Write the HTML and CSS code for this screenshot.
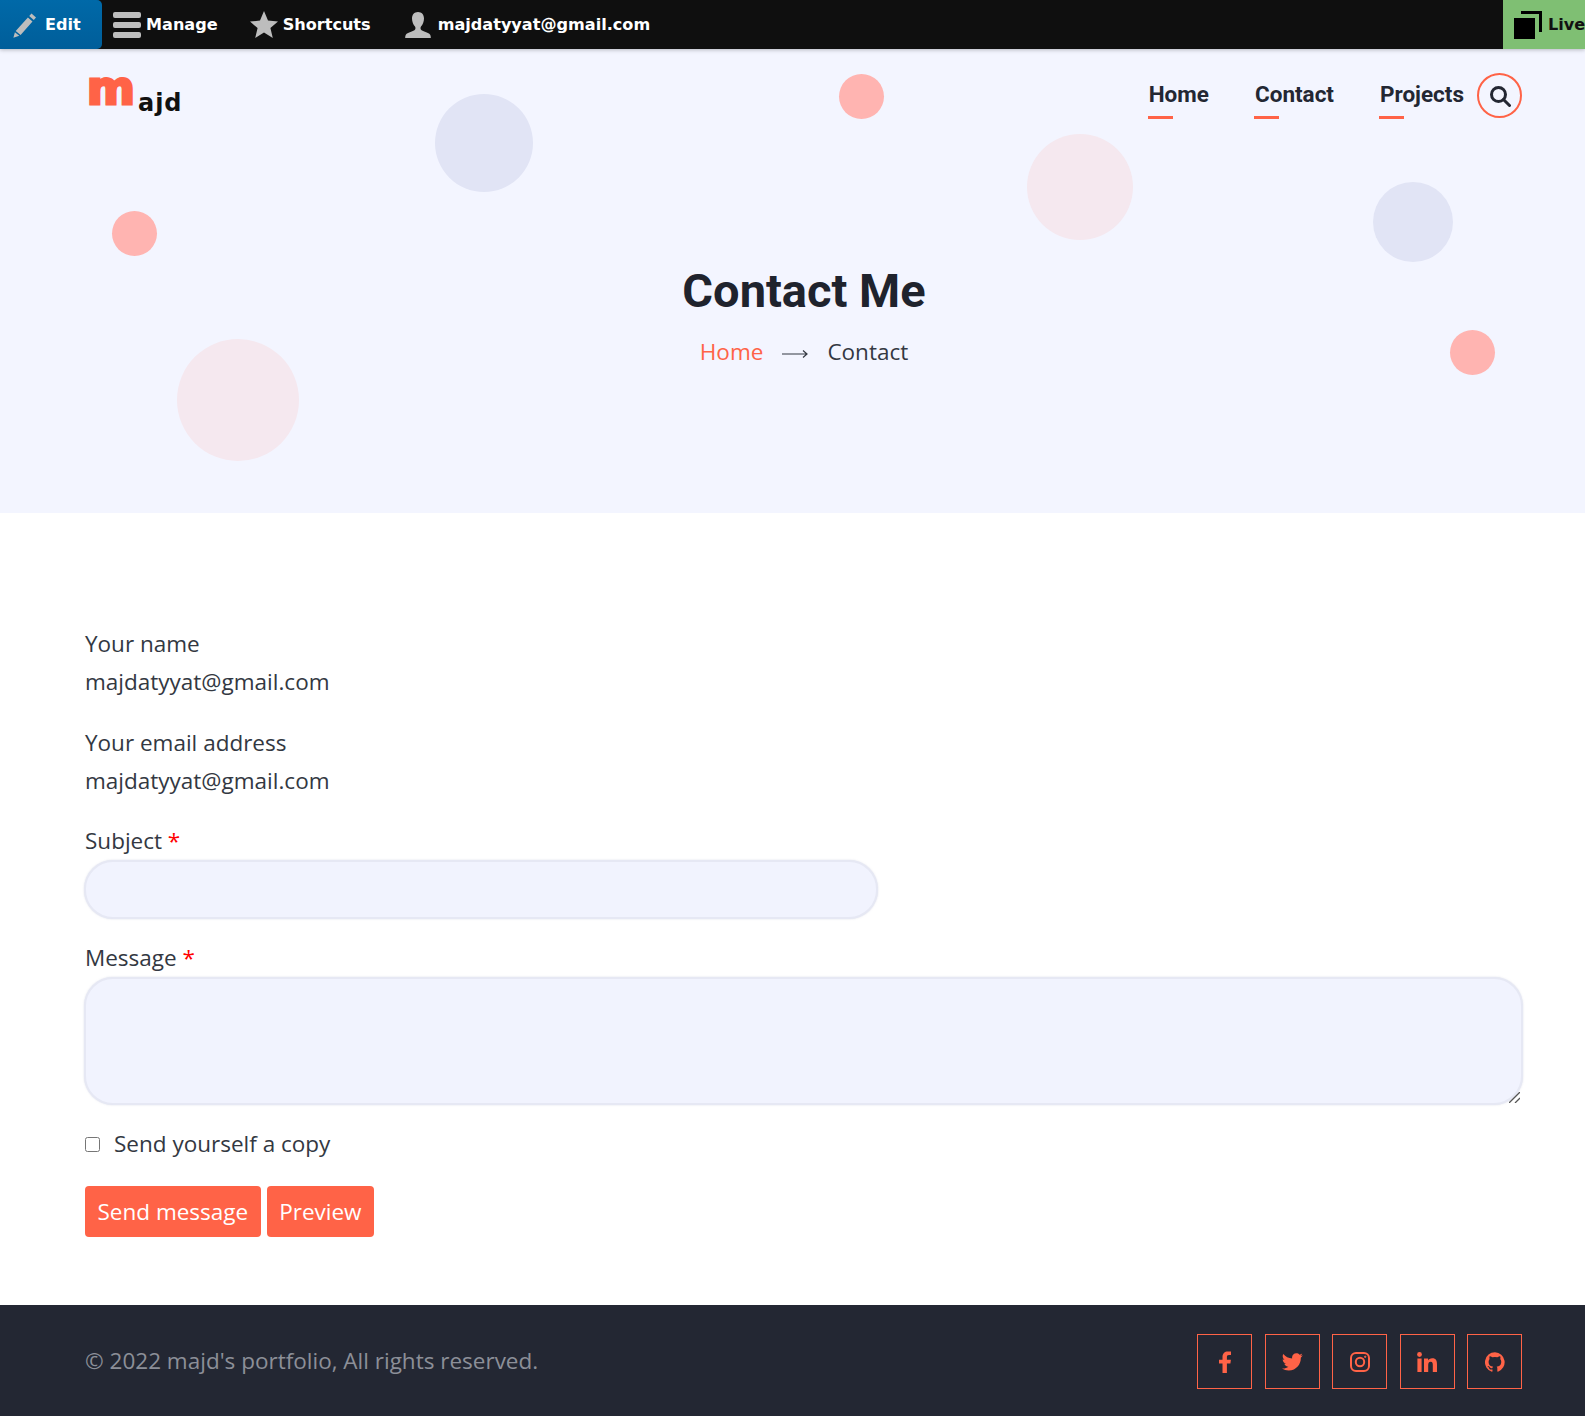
FILE: index.html
```html
<!DOCTYPE html>
<html lang="en">
<head>
    <meta charset="UTF-8">
    <meta name="viewport" content="width=device-width, initial-scale=1.0">
    <title>Contact Me</title>
    <link rel="stylesheet" href="styles.css">
</head>
<body>
    <div class="toolbar">
        <a class="tool tool-edit">
            <svg class="tool-icon" width="26" height="26" viewBox="0 0 26 26"><path d="M19.500 1.500l4.500 4-2.200 2.600-4.600-4zM15.900 5.400l4.600 4L8.600 23 3.700 19zM2.900 20.200l4.400 3.600-5.900 2z" fill="#bdbdbd"/></svg>
            <span>Edit</span>
        </a>
        <a class="tool tool-manage">
            <svg class="tool-icon" width="28" height="28" viewBox="0 0 28 28"><g fill="#bdbdbd"><rect y="1" width="28" height="6" rx="2"/><rect y="11" width="28" height="6" rx="2"/><rect y="21" width="28" height="6" rx="2"/></g></svg>
            <span>Manage</span>
        </a>
        <a class="tool tool-shortcuts">
            <svg class="tool-icon" width="28" height="28" viewBox="0 0 28 28"><path d="M14 0l4 9.600 10 .9-7.600 6.600L22.800 27 14 21.600 5.200 27l2.400-9.900L0 10.500l10-.9z" fill="#bdbdbd"/></svg>
            <span>Shortcuts</span>
        </a>
        <a class="tool tool-user">
            <svg class="tool-icon" width="28" height="28" viewBox="0 0 28 28"><path d="M14 1c3.800 0 6 2.800 6 6.500 0 3.200-1.300 6.200-3 8-.8 1-.6 3 .6 3.800 2.400 1.500 6.900 2.300 8.400 4.300.6.800.8 2.200.8 3.400H1.200c0-1.200.2-2.600.8-3.400 1.500-2 6-2.800 8.400-4.300 1.200-.8 1.400-2.800.6-3.800-1.700-1.800-3-4.800-3-8C8 3.800 10.200 1 14 1z" fill="#bdbdbd"/></svg>
            <span>majdatyyat@gmail.com</span>
        </a>
        <a class="tool tool-live">
            <svg class="tool-icon" width="28" height="28" viewBox="0 0 28 28"><rect y="7" width="21" height="21" fill="#000"/><path d="M7 0h21v21h-3V3H7z" fill="#000"/></svg>
            <span>Live</span>
        </a>
    </div>

    <header class="hero">
        <span class="dot dot-blue" style="left:435px;top:45px;width:98px;height:98px"></span>
        <span class="dot dot-salmon" style="left:839px;top:25px;width:45px;height:45px"></span>
        <span class="dot dot-pink" style="left:1027px;top:85px;width:106px;height:106px"></span>
        <span class="dot dot-blue" style="left:1373px;top:133px;width:80px;height:80px"></span>
        <span class="dot dot-salmon" style="left:112px;top:162px;width:45px;height:45px"></span>
        <span class="dot dot-salmon" style="left:1450px;top:281px;width:45px;height:45px"></span>
        <span class="dot dot-pink" style="left:177px;top:290px;width:122px;height:122px"></span>

        <nav class="navbar">
            <a class="logo"><span class="logo-m">m</span><span class="logo-rest">ajd</span></a>
            <ul class="nav-links">
                <li><a>Home</a></li>
                <li><a>Contact</a></li>
                <li><a>Projects</a></li>
            </ul>
            <button class="search-btn">
                <svg width="22" height="22" viewBox="0 0 22 22" fill="none" stroke="#232733" stroke-width="3"><circle cx="9.500" cy="9.500" r="7"/><path d="M14.500 14.500l6 6" stroke-linecap="round"/></svg>
            </button>
        </nav>

        <div class="hero-title">
            <h1>Contact Me</h1>
            <p class="crumbs">
                <a>Home</a>
                <svg class="crumb-arrow" width="26" height="10" viewBox="0 0 26 10" fill="none" stroke="#333842" stroke-width="1.200"><path d="M0 5h25M21 1.500L25 5l-4 3.500"/></svg>
                <span>Contact</span>
            </p>
        </div>
    </header>

    <main class="contact">
        <div class="field">
            <label>Your name</label>
            <div class="value">majdatyyat@gmail.com</div>
        </div>
        <div class="field field-tight">
            <label>Your email address</label>
            <div class="value">majdatyyat@gmail.com</div>
        </div>
        <div class="field field-input">
            <label>Subject <span class="req">*</span></label>
            <input type="text" class="input-subject">
        </div>
        <div class="field field-input">
            <label>Message <span class="req">*</span></label>
            <div class="message-box">
                <textarea class="input-message"></textarea>
                <svg class="grip" width="11" height="11" viewBox="0 0 11 11" stroke="#555" stroke-width="1.300"><path d="M0 11L11 0M6 11l5-5"/></svg>
            </div>
        </div>
        <label class="copy-row"><input type="checkbox"><span>Send yourself a copy</span></label>
        <div class="actions">
            <button class="btn">Send message</button>
            <button class="btn">Preview</button>
        </div>
    </main>

    <footer class="footer">
        <p>© 2022 majd's portfolio, All rights reserved.</p>
        <div class="socials">
            <a class="social"><svg width="16" height="22" viewBox="0 0 12 22"><path d="M3.500 22V12.500H0V8.700h3.500V6c0-3.600 2.100-5.600 5.400-5.600 1.500 0 2.800.1 3.100.2v3.500H10c-1.700 0-2.100.8-2.100 2v2.600h4l-.5 3.800H7.900V22z" fill="#ff6347"/></svg></a>
            <a class="social"><svg width="21" height="18" viewBox="0 0 24 20"><path d="M21.500 5c0 .2 0 .4 0 .6C21.500 12.100 16.600 19.600 7.600 19.600 4.800 19.600 2.200 18.800 0 17.400c.4 0 .8.100 1.200.1 2.300 0 4.400-.8 6.100-2.100-2.200 0-4-1.500-4.600-3.400.3 0 .6.100.9.100.4 0 .9-.1 1.300-.2C2.600 11.400.8 9.400.8 7v-.1c.7.400 1.400.6 2.200.6C1.700 6.700.8 5.100.8 3.400c0-.9.200-1.800.7-2.500 2.400 3 6.100 4.900 10.100 5.100-.1-.4-.1-.7-.1-1.100C11.500 2.200 13.700 0 16.400 0c1.400 0 2.700.6 3.600 1.600 1.100-.2 2.200-.6 3.100-1.200-.4 1.200-1.100 2.100-2.100 2.700 1-.1 1.900-.4 2.800-.8-.7 1-1.500 1.900-2.300 2.700z" fill="#ff6347"/></svg></a>
            <a class="social"><svg width="20" height="20" viewBox="0 0 20 20" fill="none" stroke="#ff6347" stroke-width="2"><rect x="1" y="1" width="18" height="18" rx="5"/><circle cx="10" cy="10" r="4.200"/><circle cx="15.200" cy="4.800" r=".7" fill="#ff6347" stroke-width="1"/></svg></a>
            <a class="social"><svg width="20" height="20" viewBox="0 0 20 20" fill="#ff6347"><circle cx="2.500" cy="2.500" r="2.400"/><rect x=".4" y="6.500" width="4.200" height="13.500"/><path d="M7 6.500h4v1.900c.7-1.200 2.200-2.200 4.200-2.200 4.100 0 4.800 2.700 4.800 6.200V20h-4.200v-6.700c0-1.600 0-3.500-2.100-3.500s-2.500 1.700-2.500 3.400V20H7z"/></svg></a>
            <a class="social"><svg width="20" height="20" viewBox="0 0 24 24"><path d="M12 .3a12 12 0 0 0-3.800 23.400c.6.100.8-.3.800-.6v-2.100c-3.300.7-4-1.600-4-1.600-.6-1.400-1.400-1.800-1.400-1.800-1.100-.7.100-.7.100-.7 1.200.1 1.800 1.200 1.800 1.200 1.100 1.800 2.800 1.300 3.500 1 .1-.8.400-1.300.8-1.600-2.700-.3-5.500-1.300-5.500-5.900 0-1.300.5-2.400 1.200-3.200-.1-.3-.5-1.500.1-3.200 0 0 1-.3 3.300 1.200a11.500 11.500 0 0 1 6 0c2.300-1.500 3.300-1.200 3.300-1.200.7 1.700.2 2.900.1 3.200.8.800 1.200 1.900 1.200 3.200 0 4.600-2.800 5.600-5.500 5.900.4.400.8 1.100.8 2.200v3.300c0 .3.200.7.800.6A12 12 0 0 0 12 .3z" fill="#ff6347"/></svg></a>
        </div>
    </footer>
</body>
</html>
```

FILE: styles.css
```css
* {
    box-sizing: border-box;
}

body {
    margin: 0;
    font-family: 'Open Sans', sans-serif;
    font-size: 22.500px;
    color: #333842;
    background-color: #fff;
}

a {
    text-decoration: none;
}

/* admin toolbar */
.toolbar {
    position: relative;
    z-index: 2;
    display: flex;
    height: 49px;
    background-color: #0f0f0f;
    box-shadow: 0 1px 4px rgba(0, 0, 0, 0.25);
    font-family: 'DejaVu Sans', sans-serif;
    font-size: 16.100px;
    font-weight: 700;
    color: #fff;
    overflow: hidden;
}

.tool {
    display: flex;
    align-items: center;
    gap: 5px;
}

.tool-edit {
    width: 102px;
    padding-left: 12px;
    gap: 7px;
    background: linear-gradient(#0069a8, #005e9a);
    border-radius: 0 5px 5px 0;
}

.tool-manage {
    margin-left: 11px;
}

.tool-shortcuts {
    margin-left: 32px;
}

.tool-user {
    margin-left: 33px;
}

.tool-user span {
    margin-left: 1px;
}

.tool-live {
    margin-left: auto;
    width: 82px;
    flex-shrink: 0;
    padding-left: 11px;
    gap: 6px;
    background-color: #7fbf73;
    color: #111;
}

.tool-icon {
    flex-shrink: 0;
}

/* hero */
.hero {
    position: relative;
    height: 464px;
    background-color: #f3f5ff;
    overflow: hidden;
}

.dot {
    position: absolute;
    border-radius: 50%;
}

.dot-blue {
    background-color: #e1e4f5;
}

.dot-pink {
    background-color: #f5e8ef;
}

.dot-salmon {
    background-color: #ffb4b1;
}

.navbar {
    position: relative;
    display: flex;
    align-items: flex-start;
    padding: 24px 63px 0 87px;
}

.logo {
    display: flex;
    align-items: flex-end;
    height: 44px;
    color: #111;
    font-family: 'DejaVu Sans', sans-serif;
    font-weight: 700;
}

.logo-m {
    font-size: 46px;
    line-height: 31px;
    color: #ff6347;
    -webkit-text-stroke: 3px #ff6347;
    align-self: flex-start;
}

.logo-rest {
    font-size: 24px;
    line-height: 30px;
    letter-spacing: 1px;
    margin-left: 3px;
    margin-bottom: -1px;
}

.nav-links {
    display: flex;
    gap: 46px;
    list-style: none;
    margin: 1px 13px 0 auto;
    padding: 0;
    font-family: Roboto, sans-serif;
    font-size: 22.500px;
    font-weight: 700;
    color: #232733;
}

.nav-links a {
    position: relative;
    display: block;
    height: 45px;
    line-height: 40px;
}

.nav-links a::after {
    content: "";
    position: absolute;
    left: -1px;
    bottom: 0;
    width: 25px;
    height: 3px;
    background-color: #ff6347;
}

.search-btn {
    display: flex;
    align-items: center;
    justify-content: center;
    width: 45px;
    height: 45px;
    padding: 0;
    background: none;
    border: 2px solid #ff6347;
    border-radius: 50%;
}

.hero-title {
    position: relative;
    margin-top: 145px;
    padding-left: 23px;
    text-align: center;
}

.hero-title h1 {
    margin: 0;
    font-family: Roboto, sans-serif;
    font-size: 47px;
    font-weight: 700;
    line-height: 54px;
    color: #1f232d;
}

.crumbs {
    display: flex;
    justify-content: center;
    align-items: center;
    gap: 19px;
    margin: 18px 0 0;
    font-size: 22.500px;
    line-height: 32px;
    color: #333842;
}

.crumbs a {
    color: #ff6347;
}

.crumb-arrow {
    margin-top: 3px;
}

/* contact form */
.contact {
    height: 792px;
    padding: 112px 62px 0 85px;
    line-height: 38px;
}

.field {
    margin-bottom: 23px;
}

.field-tight {
    margin-bottom: 22px;
}

.field-input {
    margin-bottom: 20px;
}

.field label {
    display: block;
}

.req {
    color: #f00;
}

.input-subject,
.input-message {
    display: block;
    background-color: #f1f3fe;
    border: 2px solid #e6e8f4;
    box-shadow: 0 0 2px rgba(150, 155, 190, 0.35);
    outline: none;
}

.input-subject {
    width: 794px;
    height: 59px;
    border-radius: 29px;
    margin-left: -1px;
}

.message-box {
    position: relative;
    margin-left: -1px;
}

.input-message {
    width: 1439px;
    height: 128px;
    border-radius: 29px;
    resize: none;
}

.grip {
    position: absolute;
    right: 3px;
    bottom: 2px;
}

.copy-row {
    display: flex;
    align-items: center;
    gap: 14px;
}

.copy-row input {
    width: 15px;
    height: 15px;
    margin: 0;
}

.actions {
    display: flex;
    gap: 6px;
    margin-top: 23px;
}

.btn {
    height: 51px;
    padding: 0 12.500px;
    font-family: 'Open Sans', sans-serif;
    font-size: 22.500px;
    color: #fff;
    background-color: #ff6347;
    border: none;
    border-radius: 4px;
}

/* footer */
.footer {
    display: flex;
    align-items: center;
    justify-content: space-between;
    height: 111px;
    padding: 0 63px 0 85px;
    background-color: #232733;
    color: #8c8f98;
}

.footer p {
    margin: 0;
}

.socials {
    display: flex;
    gap: 12.500px;
    margin-top: 2px;
}

.social {
    display: flex;
    align-items: center;
    justify-content: center;
    width: 55px;
    height: 55px;
    border: 1px solid #ff6347;
}
```
